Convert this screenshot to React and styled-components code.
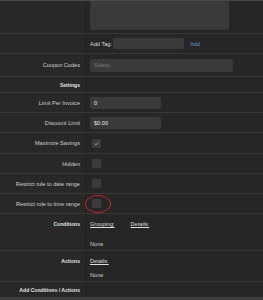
import React from "react";
import styled, { createGlobalStyle } from "styled-components";

const Global = createGlobalStyle`
  html, body {
    margin: 0;
    padding: 0;
    background: #262626;
  }
  body {
    font-family: "Liberation Sans", Arial, sans-serif;
  }
`;

const Panel = styled.div`
  width: 263px;
  height: 300px;
  box-sizing: border-box;
  background: #262626;
  border-top: 1px solid #4a4a4a;
  border-bottom: 3px solid #3e3e3e;
  overflow: hidden;
  color: #d6d6d6;
  font-size: 5.6px;
`;

const Row = styled.div`
  display: flex;
  height: ${(p) => p.h}px;
  box-sizing: border-box;
  border-bottom: ${(p) => (p.last ? "none" : "1px solid #383838")};
`;

const Label = styled.div`
  width: 86px;
  flex: none;
  box-sizing: border-box;
  padding-right: 5px;
  border-right: 1px solid #1f1f1f;
  background: #282828;
  display: flex;
  justify-content: flex-end;
  align-items: ${(p) => (p.top ? "flex-start" : "center")};
  padding-top: ${(p) => (p.top ? "7px" : "0")};
  font-weight: ${(p) => (p.bold ? "bold" : "normal")};
  font-size: ${(p) => (p.bold ? "5.1px" : "5.6px")};
  color: ${(p) => (p.bold ? "#e4e4e4" : "#cfcfcf")};
  white-space: nowrap;
`;

const Value = styled.div`
  flex: 1;
  position: relative;
  box-sizing: border-box;
  padding-left: 4px;
  display: flex;
  flex-direction: ${(p) => (p.stack ? "column" : "row")};
  align-items: ${(p) => (p.stack ? "flex-start" : "center")};
  justify-content: ${(p) => (p.stack ? "space-between" : "flex-start")};
  padding-top: ${(p) => (p.stack ? "7px" : "0")};
  padding-bottom: ${(p) => (p.stack ? "3px" : "0")};
`;

const TextArea = styled.div`
  width: 139px;
  height: 29px;
  align-self: flex-start;
  background: #3a3a3a;
  border-radius: 2px;
`;

const Input = styled.div`
  width: ${(p) => p.w}px;
  height: ${(p) => p.hh || 12}px;
  box-sizing: border-box;
  background: #3a3a3a;
  border-radius: 2px;
  padding-left: 4px;
  display: flex;
  align-items: center;
  color: ${(p) => (p.muted ? "#7d7d7d" : "#e6e6e6")};
`;

const TagLabel = styled.span`
  margin-right: 1px;
  color: #dcdcdc;
`;

const AddLink = styled.span`
  margin-left: 6px;
  color: #5b9bc8;
`;

const Check = styled.div`
  width: 9px;
  height: 9px;
  margin-left: 2px;
  background: #3b3b3b;
  border-radius: 1px;
  display: flex;
  align-items: center;
  justify-content: center;
`;

const Circle = styled.div`
  position: absolute;
  left: -1px;
  top: 1px;
  width: 24px;
  height: 16px;
  border: 1px solid #c3262a;
  border-radius: 50%;
`;

const Links = styled.div`
  display: flex;
  gap: 16px;
`;

const U = styled.span`
  text-decoration: underline;
  color: #dedede;
`;

const Muted = styled.span`
  color: #cfcfcf;
`;

export default function App() {
  return (
    <>
      <Global />
      <Panel>
        <Row h={33}>
          <Label />
          <Value>
            <TextArea />
          </Value>
        </Row>
        <Row h={20}>
          <Label />
          <Value>
            <TagLabel>Add Tag:</TagLabel>
            <Input w={71} hh={11} />
            <AddLink>Add</AddLink>
          </Value>
        </Row>
        <Row h={23}>
          <Label>Coupon Codes</Label>
          <Value>
            <Input w={143} hh={13} muted>
              Select...
            </Input>
          </Value>
        </Row>
        <Row h={16}>
          <Label bold>Settings</Label>
          <Value />
        </Row>
        <Row h={20}>
          <Label>Limit Per Invoice</Label>
          <Value>
            <Input w={71}>0</Input>
          </Value>
        </Row>
        <Row h={20}>
          <Label>Discount Limit</Label>
          <Value>
            <Input w={71}>$0.00</Input>
          </Value>
        </Row>
        <Row h={21}>
          <Label>Maximize Savings</Label>
          <Value>
            <Check>
              <svg width="7" height="7" viewBox="0 0 10 10">
                <path d="M2 5.2 L4.2 7.3 L8 2.8" fill="none" stroke="#9a9a9a" strokeWidth="1.3" />
              </svg>
            </Check>
          </Value>
        </Row>
        <Row h={20}>
          <Label>Hidden</Label>
          <Value>
            <Check />
          </Value>
        </Row>
        <Row h={20}>
          <Label>Restrict rule to date range</Label>
          <Value>
            <Check />
          </Value>
        </Row>
        <Row h={20}>
          <Label>Restrict rule to time range</Label>
          <Value>
            <Check />
            <Circle />
          </Value>
        </Row>
        <Row h={37}>
          <Label bold top>
            Conditions
          </Label>
          <Value stack>
            <Links>
              <U>Grouping:</U>
              <U>Details:</U>
            </Links>
            <Muted>None</Muted>
          </Value>
        </Row>
        <Row h={31}>
          <Label bold top>
            Actions
          </Label>
          <Value stack>
            <U>Details:</U>
            <Muted>None</Muted>
          </Value>
        </Row>
        <Row h={15} last>
          <Label bold>Add Conditions / Actions</Label>
          <Value />
        </Row>
      </Panel>
    </>
  );
}
